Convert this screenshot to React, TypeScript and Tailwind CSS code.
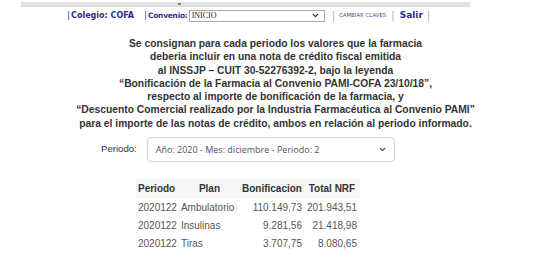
import { ChevronDown } from 'lucide-react';

const rows = [
  { periodo: '2020122', plan: 'Ambulatorio', bonif: '110.149,73', total: '201.943,51' },
  { periodo: '2020122', plan: 'Insulinas', bonif: '9.281,56', total: '21.418,98' },
  { periodo: '2020122', plan: 'Tiras', bonif: '3.707,75', total: '8.080,65' },
];

function TopNav() {
  return (
    <div className="flex items-center h-[15px] mt-[1px] pl-[67px] font-['DejaVu_Sans',sans-serif] text-[#2b2f86]">
      <span className="text-[9px] leading-none text-[#3b4a8f]">|</span>
      <span className="ml-[1px] text-[8px] font-bold leading-none">Colegio: COFA</span>
      <span className="ml-[10px] text-[9px] leading-none text-[#3b4a8f]">|</span>
      <span className="ml-[1px] text-[7.4px] font-bold leading-none tracking-[-0.2px]">Convenio:</span>
      <div className="ml-[1px] flex items-center justify-between w-[136px] h-[12px] border border-[#a5acb5] bg-white pl-[2px] pr-[4px]">
        <span className="text-[8px] leading-none font-['Liberation_Serif',serif] text-[#222]">INICIO</span>
        <ChevronDown size={9} strokeWidth={3.5} className="text-[#1f2a6b]" />
      </div>
      <span className="ml-[7px] text-[10px] leading-none text-[#a7aab8]">|</span>
      <span className="ml-[4px] text-[5.4px] leading-none text-[#4b5190]">CAMBIAR CLAVES</span>
      <span className="ml-[5px] text-[10px] leading-none text-[#a7aab8]">|</span>
      <span className="ml-[5px] text-[9px] font-bold leading-none">Salir</span>
      <span className="ml-[4px] text-[10px] leading-none text-[#a7aab8]">|</span>
    </div>
  );
}

export default function App() {
  return (
    <div className="w-[551px] h-[259px] bg-white overflow-hidden">
      {/* top strip */}
      <div className="relative ml-[21px] mt-[2px] w-[449px] h-[5px] bg-[#e1e1e1]">
        <div className="absolute left-[157px] top-[1px] w-[3px] h-[2px] bg-[#8a9090]"></div>
      </div>

      <TopNav />

      <p className="mt-[14px] text-center font-['Liberation_Sans',Arial,sans-serif] font-bold text-[10.3px] leading-[13.3px] text-[#333]">
        Se consignan para cada periodo los valores que la farmacia
        <br />
        deberia incluir en una nota de crédito fiscal emitida
        <br />
        al INSSJP – CUIT 30-52276392-2, bajo la leyenda
        <br />
        “Bonificación de la Farmacia al Convenio PAMI-COFA 23/10/18”,
        <br />
        respecto al importe de bonificación de la farmacia, y
        <br />
        “Descuento Comercial realizado por la Industria Farmacéutica al Convenio PAMI”
        <br />
        para el importe de las notas de crédito, ambos en relación al periodo informado.
      </p>

      <div className="flex items-center mt-[7px] pl-[101px]">
        <span className="font-['Liberation_Sans',Arial,sans-serif] text-[9.6px] text-[#333]">Periodo:</span>
        <div className="ml-[10px] flex items-center justify-between w-[248px] h-[25px] border border-[#d4d4d4] rounded-[4px] bg-white pl-[8px] pr-[7px]">
          <span className="font-['Open_Sans',sans-serif] text-[9px] text-[#555]">Año: 2020 - Mes: diciembre - Periodo: 2</span>
          <ChevronDown size={9} strokeWidth={3} className="text-[#444]" />
        </div>
      </div>

      <table className="mt-[17px] ml-[136px] border-collapse font-['Liberation_Sans',Arial,sans-serif] text-[10px]">
        <thead>
          <tr className="h-[19px] bg-[#f6f6f6] text-[#333]">
            <th className="w-[42px] px-[2px] py-0 text-left font-bold">Periodo</th>
            <th className="w-[61px] px-[2px] py-0 text-center font-bold">Plan</th>
            <th className="w-[64px] px-[2px] py-0 text-center font-bold">Bonificacion</th>
            <th className="w-[56px] px-[2px] py-0 text-center font-bold">Total NRF</th>
          </tr>
        </thead>
        <tbody className="text-[#555]">
          {rows.map((r) => (
            <tr key={r.plan} className="h-[18px]">
              <td className="px-[2px] py-0">{r.periodo}</td>
              <td className="px-[2px] py-0">{r.plan}</td>
              <td className="px-[2px] py-0 text-right">{r.bonif}</td>
              <td className="pl-[2px] pr-[3px] py-0 text-right">{r.total}</td>
            </tr>
          ))}
        </tbody>
      </table>
    </div>
  );
}
